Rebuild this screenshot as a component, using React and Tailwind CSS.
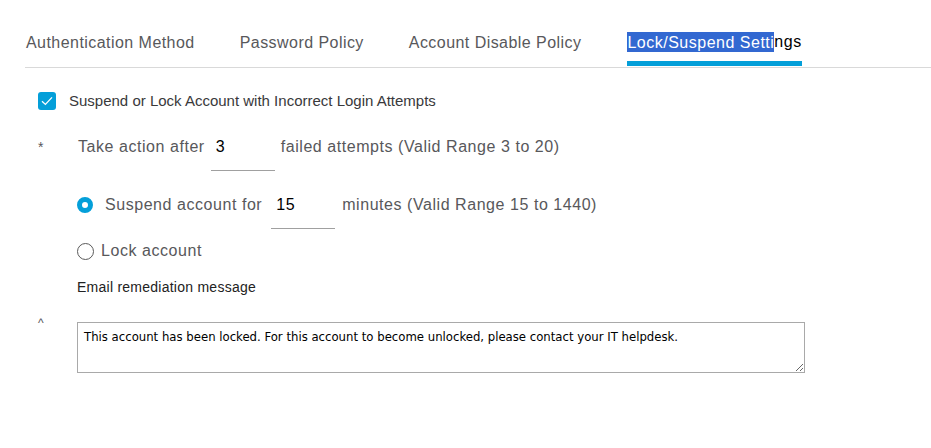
import { useState } from "react";

const tabs = ["Authentication Method", "Password Policy", "Account Disable Policy"];

export default function App() {
  const [mode, setMode] = useState("suspend");
  const [attempts, setAttempts] = useState("3");
  const [minutes, setMinutes] = useState("15");

  return (
    <div className="w-[931px] h-[448px] bg-white font-['Liberation_Sans',Arial,sans-serif] text-[#58585b]">
      {/* tab bar */}
      <div className="ml-[25px] flex items-end border-b border-[#d9d9d9] h-[68px]">
        {tabs.map((t, i) => (
          <div
            key={t}
            className={
              i === 0
                ? "ml-[1px] pb-[13px] mr-[45px] text-[16px] leading-[22px] tracking-[0.45px]"
                : "pb-[13px] mr-[45px] text-[16px] leading-[22px] tracking-[0.45px]"
            }
          >
            {t}
          </div>
        ))}
        <div className="ml-[1px] mb-[1px] border-b-[5px] border-[#049fd9] pb-[8px] text-[16px] leading-[22px] tracking-[0.5px]">
          <span className="bg-[#3268d1] text-white py-[1.5px]">Lock/Suspend Setti</span>
          <span className="text-black">ngs</span>
        </div>
      </div>

      <div className="pl-[38px] pt-[24px]">
        <label className="flex items-center gap-[13px] text-[15px] leading-[18px] text-[#39393b]">
          <span className="w-[18px] h-[18px] rounded-[3px] bg-[#049fd9] flex items-center justify-center">
            <svg width="12" height="10" viewBox="0 0 12 10" fill="none">
              <path d="M1 5.2 L4.4 8.4 L11 1.4" stroke="white" strokeWidth="1.3" />
            </svg>
          </span>
          Suspend or Lock Account with Incorrect Login Attempts
        </label>

        <div className="flex items-start mt-[27px] text-[16px] leading-[20px] tracking-[0.55px]">
          <span className="w-[40px] text-[14px]">*</span>
          <span>Take action after</span>
          <input
            value={attempts}
            onChange={(e) => setAttempts(e.target.value)}
            className="ml-[6px] w-[64px] h-[34px] pb-[13px] px-[5px] border-b border-[#a0a0a0] outline-none text-black text-[16px] leading-[20px]"
          />
          <span className="ml-[6px]">failed attempts (Valid Range 3 to 20)</span>
        </div>

        <div className="pl-[39px]">
          <div className="flex items-start mt-[24px] text-[16px] leading-[20px] tracking-[0.55px]">
            <button
              onClick={() => setMode("suspend")}
              className={
                mode === "suspend"
                  ? "mt-[2px] w-[16px] h-[16px] rounded-full border-[5px] border-[#049fd9] bg-white"
                  : "mt-[2px] w-[17px] h-[17px] rounded-full border border-[#5a5a5a] bg-white"
              }
            />
            <span className="ml-[12px]">Suspend account for</span>
            <input
              value={minutes}
              onChange={(e) => setMinutes(e.target.value)}
              className="ml-[9px] w-[64px] h-[34px] pb-[13px] px-[5px] border-b border-[#a0a0a0] outline-none text-black text-[16px] leading-[20px]"
            />
            <span className="ml-[7px]">minutes (Valid Range 15 to 1440)</span>
          </div>

          <div
            className="flex items-center mt-[12px] text-[16px] leading-[20px] tracking-[0.55px] cursor-pointer"
            onClick={() => setMode("lock")}
          >
            <span
              className={
                mode === "lock"
                  ? "w-[16px] h-[16px] rounded-full border-[5px] border-[#049fd9] bg-white"
                  : "w-[17px] h-[17px] rounded-full border border-[#5a5a5a] bg-white"
              }
            />
            <span className="ml-[7px]">Lock account</span>
          </div>

          <div className="mt-[17px] text-[14px] leading-[18px] tracking-[0.25px] text-[#222]">
            Email remediation message
          </div>
        </div>

        <div className="flex items-start mt-[26px]">
          <span className="w-[39px] text-[12px] -mt-[8px]">^</span>
          <textarea
            defaultValue="This account has been locked. For this account to become unlocked, please contact your IT helpdesk."
            className="w-[728px] h-[51px] border border-[#a9a9a9] px-[6px] pt-[4px] pb-[3px] text-[13px] text-black font-['DejaVu_Sans_Condensed','DejaVu_Sans',sans-serif] outline-none"
          />
        </div>
      </div>
    </div>
  );
}
